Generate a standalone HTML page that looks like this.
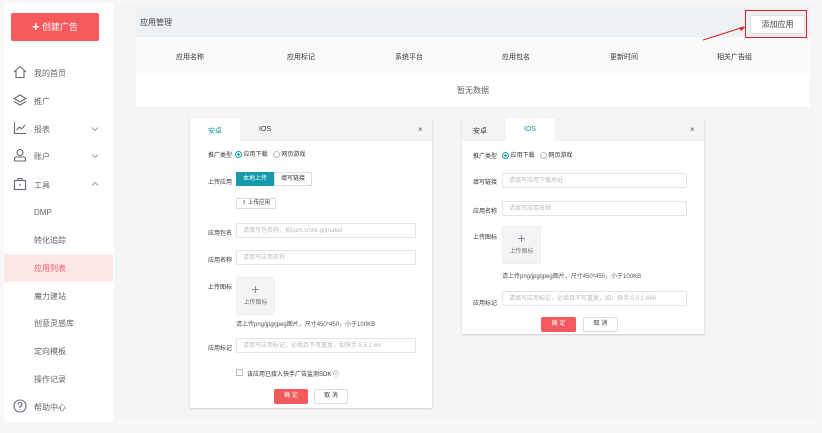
<!DOCTYPE html><html><head><meta charset="utf-8"><style>
*{margin:0;padding:0;box-sizing:border-box}
body{width:822px;height:433px;background:#f7f7f9;font-family:"Liberation Sans","Noto Sans CJK SC",sans-serif;position:relative;overflow:hidden;color:#333}
.a{position:absolute}
.side{left:4px;top:3px;width:110px;height:419px;background:#fff}
.main{left:114px;top:3px;width:703px;height:416px;background:#f4f5f7}
.nav{font-size:8px;color:#666;left:34px}
.ic{left:13px;width:14px;height:14px}
.chev{left:91px;width:8px;height:6px}
.lbl{font-size:6px;color:#333}
.inp{border:1px solid #e3e3e3;border-radius:2px;height:15px;background:#fff;font-size:6px;color:#bbb;padding:3px 6px;line-height:8px}
.up{background:#f4f4f6;border:1px solid #eee;width:39px;height:38px;text-align:center;font-size:6px;color:#777}
.btnr{background:#f25a5e;color:#fff;font-size:6px;text-align:center;border-radius:2px;height:15px;line-height:15px}
.btnw{background:#fff;border:1px solid #ddd;color:#333;font-size:6px;text-align:center;border-radius:2px;height:15px;line-height:13px}
.radio{width:7px;height:7px;border:1px solid #bbb;border-radius:50%;display:inline-block;vertical-align:middle}
.on{border-color:#149aaa;background:radial-gradient(#149aaa 35%,#fff 40%)}
</style></head><body>
<div class="a side"></div>
<div class="a" style="left:11px;top:13px;width:88px;height:28px;background:#f65a5c;border-radius:2px;color:#fff;font-size:9px;text-align:center;line-height:28px"><b style="font-size:13px;vertical-align:-1px">+</b> 创建广告</div>
<svg class="a ic" style="top:65px" viewBox="0 0 14 14" fill="none" stroke="#667" stroke-width="1.1"><path d="M1 7L7 1.5 13 7M3 5.5V12.5H11V5.5"/></svg>
<div class="a nav" style="top:68px">我的首页</div>
<svg class="a ic" style="top:93px" viewBox="0 0 14 14" fill="none" stroke="#667" stroke-width="1.1"><path d="M7 2L13 5.5 7 9 1 5.5Z M1 8.5L7 12 13 8.5"/></svg>
<div class="a nav" style="top:96px">推广</div>
<svg class="a ic" style="top:121px" viewBox="0 0 14 14" fill="none" stroke="#667" stroke-width="1.1"><path d="M1.5 1V12.5H13M3.5 9L6.5 6 8.5 8 12 4"/></svg>
<div class="a nav" style="top:124px">报表</div>
<svg class="a chev" style="top:126px" viewBox="0 0 8 6" fill="none" stroke="#999" stroke-width="0.9"><path d="M1 1.5L4 4.5 7 1.5"/></svg>
<svg class="a ic" style="top:148px" viewBox="0 0 14 14" fill="none" stroke="#667" stroke-width="1.1"><circle cx="7" cy="4.5" r="3"/><path d="M1.5 13V11Q1.5 9 4 9H10Q12.5 9 12.5 11V13Z"/></svg>
<div class="a nav" style="top:151px">账户</div>
<svg class="a chev" style="top:153px" viewBox="0 0 8 6" fill="none" stroke="#999" stroke-width="0.9"><path d="M1 1.5L4 4.5 7 1.5"/></svg>
<svg class="a ic" style="top:177px" viewBox="0 0 14 14" fill="none" stroke="#667" stroke-width="1.1"><rect x="1.5" y="3.5" width="11" height="9"/><path d="M5 3.5V1.5H9V3.5M7 7V9"/></svg>
<div class="a nav" style="top:180px">工具</div>
<svg class="a chev" style="top:181px" viewBox="0 0 8 6" fill="none" stroke="#999" stroke-width="0.9"><path d="M1 4.5L4 1.5 7 4.5"/></svg>
<div class="a nav" style="top:208px">DMP</div>
<div class="a nav" style="top:235px">转化追踪</div>
<div class="a" style="left:4px;top:254px;width:109px;height:28px;background:#fde8e8"></div>
<div class="a nav" style="top:263px;color:#f25a5e">应用列表</div>
<div class="a nav" style="top:291px">魔力建站</div>
<div class="a nav" style="top:318px">创意灵感库</div>
<div class="a nav" style="top:346px">定向模板</div>
<div class="a nav" style="top:374px">操作记录</div>
<svg class="a ic" style="top:399px" viewBox="0 0 14 14" fill="none" stroke="#667" stroke-width="1.1"><circle cx="7" cy="7" r="6"/><path d="M5 5.5Q5 3.5 7 3.5 9 3.5 9 5.3 9 6.5 7 7.5V9M7 10.3V11"/></svg>
<div class="a nav" style="top:402px">帮助中心</div>

<div class="a main"></div>
<div class="a" style="left:136px;top:8px;width:674px;height:29px;background:#edf1f4;font-size:8px;color:#444;padding:9px 4px">应用管理</div>
<div class="a" style="left:136px;top:37px;width:674px;height:38px;background:#fafafa"></div>
<div class="a" style="left:136px;top:75px;width:674px;height:32px;background:#fff;text-align:center;font-size:8px;color:#666;line-height:32px">暂无数据</div>
<div class="a lbl" style="left:176px;top:52px;font-size:7px">应用名称</div>
<div class="a lbl" style="left:287px;top:52px;font-size:7px">应用标记</div>
<div class="a lbl" style="left:395px;top:52px;font-size:7px">系统平台</div>
<div class="a lbl" style="left:502px;top:52px;font-size:7px">应用包名</div>
<div class="a lbl" style="left:610px;top:52px;font-size:7px">更新时间</div>
<div class="a lbl" style="left:717px;top:52px;font-size:7px">相关广告组</div>
<div class="a" style="left:745px;top:10px;width:62px;height:28px;border:1.5px solid #e02020"></div>
<div class="a" style="left:750px;top:15px;width:55px;height:19px;background:#fff;border:1px solid #ddd;border-radius:2px;font-size:8px;text-align:center;line-height:17px;color:#444">添加应用</div>
<svg class="a" style="left:700px;top:24px" width="50" height="20"><path d="M3 16L44 3" stroke="#e02020" stroke-width="1"/><path d="M46 2.5L39 3.5 41 7Z" fill="#e02020"/></svg>

<div class="a" style="left:190px;top:118px;width:242px;height:290px;background:#fff;box-shadow:0 1px 2px #ccc"></div>
<div class="a" style="left:240px;top:118px;width:192px;height:23px;background:#f4f4f4"></div>
<div class="a" style="left:208px;top:126px;font-size:7px;color:#149aaa">安卓</div>
<div class="a" style="left:259px;top:126px;font-size:7px">IOS</div>
<div class="a" style="left:418px;top:125px;font-size:8px;color:#555">×</div>
<div class="a lbl" style="left:208px;top:150px">推广类型</div>
<div class="a lbl" style="left:235px;top:149px"><span class="radio on"></span> 应用下载 &nbsp; <span class="radio"></span> 网页游戏</div>
<div class="a lbl" style="left:208px;top:177px">上传应用</div>
<div class="a" style="left:236px;top:172px;width:38px;height:14px;background:#149aaa;color:#fff;font-size:6px;text-align:center;line-height:14px">本地上传</div>
<div class="a" style="left:274px;top:172px;width:38px;height:14px;border:1px solid #ddd;font-size:6px;text-align:center;line-height:12px">填写链接</div>
<div class="a" style="left:236px;top:198px;width:40px;height:11px;border:1px solid #ddd;font-size:5.5px;text-align:center;line-height:9px">⇪ 上传应用</div>
<div class="a lbl" style="left:208px;top:228px">应用包名</div>
<div class="a inp" style="left:236px;top:223px;width:180px">请填写包名称，如com.smile.gifmaker</div>
<div class="a lbl" style="left:208px;top:255px">应用名称</div>
<div class="a inp" style="left:236px;top:250px;width:180px">请填写应用名称</div>
<div class="a lbl" style="left:208px;top:282px">上传图标</div>
<div class="a up" style="left:236px;top:277px"><div style="font-size:14px;color:#889;margin-top:3px;line-height:16px">+</div>上传图标</div>
<div class="a lbl" style="left:236px;top:319px;color:#555">请上传png/jpg/jpeg图片，尺寸450*450，小于100KB</div>
<div class="a lbl" style="left:208px;top:343px">应用标记</div>
<div class="a inp" style="left:236px;top:338px;width:180px">请填写应用标记，必填且不可重复，如快手-5.6.1.66</div>
<div class="a" style="left:236px;top:369px;width:7px;height:7px;border:1px solid #bbb"></div>
<div class="a lbl" style="left:247px;top:369px">该应用已接入快手广告监测SDK ⓘ</div>
<div class="a btnr" style="left:274px;top:389px;width:34px">确 定</div>
<div class="a btnw" style="left:314px;top:389px;width:34px">取 消</div>

<div class="a" style="left:462px;top:118px;width:242px;height:216px;background:#fff;box-shadow:0 1px 2px #ccc"></div>
<div class="a" style="left:462px;top:118px;width:44px;height:23px;background:#f4f4f4"></div>
<div class="a" style="left:555px;top:118px;width:149px;height:23px;background:#f4f4f4"></div>
<div class="a" style="left:473px;top:126px;font-size:7px">安卓</div>
<div class="a" style="left:524px;top:126px;font-size:7px;color:#149aaa">IOS</div>
<div class="a" style="left:690px;top:125px;font-size:8px;color:#555">×</div>
<div class="a lbl" style="left:473px;top:151px">推广类型</div>
<div class="a lbl" style="left:502px;top:150px"><span class="radio on"></span> 应用下载 &nbsp; <span class="radio"></span> 网页游戏</div>
<div class="a lbl" style="left:473px;top:177px">填写链接</div>
<div class="a inp" style="left:502px;top:173px;width:185px">请填写应用下载地址</div>
<div class="a lbl" style="left:473px;top:206px">应用名称</div>
<div class="a inp" style="left:502px;top:201px;width:185px">请填写应用名称</div>
<div class="a lbl" style="left:473px;top:232px">上传图标</div>
<div class="a up" style="left:502px;top:226px"><div style="font-size:14px;color:#889;margin-top:3px;line-height:16px">+</div>上传图标</div>
<div class="a lbl" style="left:502px;top:271px;color:#555">请上传png/jpg/jpeg图片，尺寸450*450，小于100KB</div>
<div class="a lbl" style="left:473px;top:298px">应用标记</div>
<div class="a inp" style="left:502px;top:291px;width:185px">请填写应用标记，必填且不可重复，如：快手-5.6.1.666</div>
<div class="a btnr" style="left:541px;top:317px;width:35px">确 定</div>
<div class="a btnw" style="left:583px;top:317px;width:35px">取 消</div>
</body></html>
